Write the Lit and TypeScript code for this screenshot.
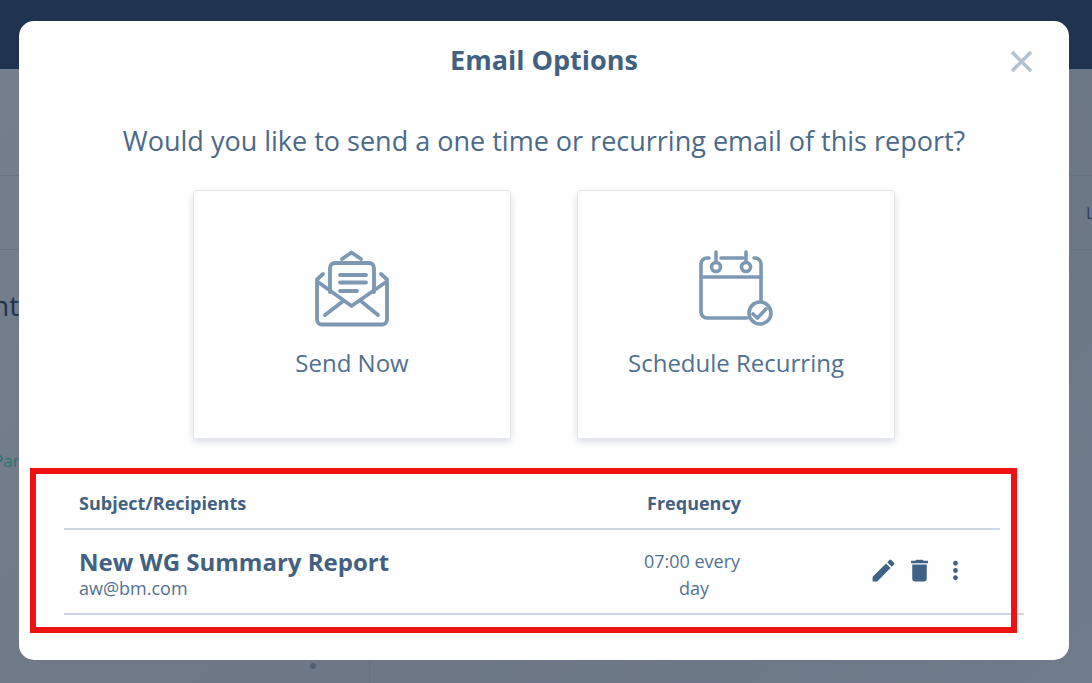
import { LitElement, html, css } from "lit";
import { customElement } from "lit/decorators.js";

@customElement("app-root")
export class AppRoot extends LitElement {
  static styles = css`
    :host { display: block; width: 1092px; height: 683px; position: relative; overflow: hidden; font-family: "Open Sans", "Noto Sans", sans-serif; color: #426182; background: #6d7786; }
    * { box-sizing: border-box; }
    .topbar { height: 69px; background: #1f3350; }
    .under { height: 614px; position: relative; padding-top: 106px; background: linear-gradient(135deg, #747e8d 0, #6d7786 60%, #707b8b 100%); color: #1f3350; font-size: 28px; }
    .band { height: 75px; border-top: 1px solid #687282; border-bottom: 1px solid #687282; }
    .bg-t { position: absolute; left: -8px; top: 219px; line-height: 34px; }
    .bg-p { position: absolute; left: -7px; top: 382px; font-size: 17px; line-height: 20px; color: #2b7573; }
    .bg-l { position: absolute; left: 1086px; top: 134px; font-size: 16px; line-height: 20px; color: #2b3f5c; }
    .bg-dot { position: absolute; left: 310px; top: 594px; width: 6px; height: 6px; border-radius: 50%; background: #555f73; }
    .bg-v { position: absolute; left: 369px; top: 591px; bottom: 0; width: 1px; background: #677181; }
    .modal { position: absolute; left: 19px; top: 21px; width: 1050px; height: 639px; background: #fff; border-radius: 15px; display: flex; flex-direction: column; align-items: center; }
    h1 { margin: 20px 0 0; font-size: 27px; line-height: 38px; font-weight: 700; color: #426182; }
    .close { position: absolute; right: 36px; top: 29px; width: 23px; height: 23px; display: block; }
    .question { margin: 44px 0 0; font-size: 27px; line-height: 36px; font-weight: 400; color: #4b6a8a; }
    .cards { display: flex; gap: 66px; margin-top: 31px; }
    .card { width: 318px; height: 249px; border: 1px solid #e3e7ec; border-radius: 3px; box-shadow: 0 3px 7px rgba(70, 90, 120, 0.2); display: flex; flex-direction: column; align-items: center; font-size: 24px; line-height: 32px; color: #507090; }
    .card svg { display: block; margin-top: 59px; width: 80px; height: 78px; }
    .card span { margin-top: 19px; }
    .table { align-self: flex-start; margin: 42px 0 0 45px; width: 960px; }
    .thead { width: 936px; height: 49px; border-bottom: 2px solid #cdd6e2; display: grid; grid-template-columns: 500px 260px; align-items: center; font-size: 18px; font-weight: 700; color: #426182; padding-bottom: 4px; }
    .thead div:first-child { padding-left: 15px; }
    .thead div:last-child { text-align: center; }
    .row { height: 85px; border-bottom: 2px solid #cdd6e2; display: grid; grid-template-columns: 500px 260px 1fr; align-items: center; }
    .subject { padding: 5px 0 0 15px; }
    .title { font-size: 24px; line-height: 28px; font-weight: 700; color: #426182; }
    .mail { margin-top: 1px; font-size: 18px; line-height: 23px; color: #54718f; }
    .freq { font-size: 18px; line-height: 27px; color: #54718f; text-align: center; width: 120px; margin-left: 68px; padding-top: 7px; }
    .freq span { margin-left: 4px; }
    .actions { display: flex; align-items: center; padding-left: 45px; gap: 7px; padding-bottom: 2px; }
    .actions svg { display: block; width: 29px; height: 29px; fill: #3f6288; }
    .annot { position: absolute; left: 30px; top: 468px; width: 987px; height: 165px; border: 6px solid #ee1212; pointer-events: none; }
  `;

  render() {
    return html`
      <div class="topbar"></div>
      <div class="under">
        <div class="band"></div>
        <div class="bg-t">nt</div>
        <div class="bg-p">Par</div>
        <div class="bg-l">L</div>
        <div class="bg-dot"></div>
        <div class="bg-v"></div>
      </div>
      <div class="modal">
        <h1>Email Options</h1>
        <svg class="close" viewBox="0 0 23 23" fill="none" stroke="#b3c1d1" stroke-width="3.4"><path d="M2 2 21 21M21 2 2 21"/></svg>
        <p class="question">Would you like to send a one time or recurring email of this report?</p>
        <div class="cards">
          <div class="card">
            <svg viewBox="0 0 80 78" fill="none" stroke="#7c98b2" stroke-width="3.8" stroke-linecap="round" stroke-linejoin="round">
              <path d="M30 9 39.500 2.500 49 9"/>
              <path d="M18 42V18a5 5 0 0 1 5-5h34a5 5 0 0 1 5 5v24"/>
              <path d="M28 25h26M28 32.500h26M28 41h17"/>
              <path d="M11 24 5 29.500v40a5 5 0 0 0 5 5h60a5 5 0 0 0 5-5v-40L69 24"/>
              <path d="M6 32 39.500 56 74 32"/>
              <path d="M13 65 30 52M66 65 50 52"/>
            </svg>
            <span>Send Now</span>
          </div>
          <div class="card">
            <svg viewBox="0 0 80 78" fill="none" stroke="#7c98b2" stroke-width="3.600" stroke-linecap="round" stroke-linejoin="round">
              <path d="M13 8H11a6 6 0 0 0-6 6v48a6 6 0 0 0 6 6H51"/>
              <path d="M25 8H47"/>
              <path d="M58 8h1a6 6 0 0 1 6 6v38"/>
              <path d="M5 27H65"/>
              <circle cx="20" cy="17" r="4.500"/>
              <circle cx="50" cy="17" r="4.500"/>
              <path d="M20 2v10M50 2v10"/>
              <circle cx="64" cy="63" r="11" fill="#fff"/>
              <path d="M57 64l4.500 4 8.500-9"/>
            </svg>
            <span>Schedule Recurring</span>
          </div>
        </div>
        <div class="table">
          <div class="thead"><div>Subject/Recipients</div><div>Frequency</div></div>
          <div class="row">
            <div class="subject">
              <div class="title">New WG Summary Report</div>
              <div class="mail">aw@bm.com</div>
            </div>
            <div class="freq">07:00 every <span>day</span></div>
            <div class="actions">
              <svg viewBox="0 0 24 24"><path d="M3 17.250V21h3.750L17.810 9.940l-3.750-3.750L3 17.250zM20.710 7.040a1 1 0 0 0 0-1.410l-2.340-2.340a1 1 0 0 0-1.410 0l-1.830 1.830 3.750 3.750 1.830-1.830z"/></svg>
              <svg viewBox="0 0 24 24"><path d="M6 19a2 2 0 0 0 2 2h8a2 2 0 0 0 2-2V7H6v12zM19 4h-3.500l-1-1h-5l-1 1H5v2h14V4z"/></svg>
              <svg viewBox="0 0 24 24"><path d="M12 8a2 2 0 1 0 0-4 2 2 0 0 0 0 4zm0 2a2 2 0 1 0 0 4 2 2 0 0 0 0-4zm0 6a2 2 0 1 0 0 4 2 2 0 0 0 0-4z"/></svg>
            </div>
          </div>
        </div>
      </div>
      <div class="annot"></div>
    `;
  }
}
